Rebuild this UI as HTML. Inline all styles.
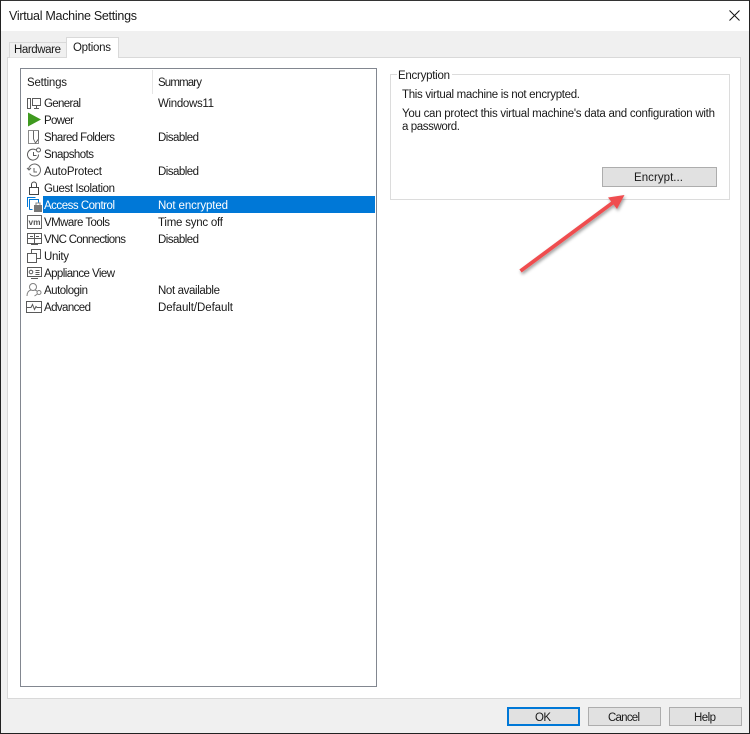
<!DOCTYPE html>
<html><head><meta charset="utf-8"><style>
html,body{margin:0;padding:0;background:#fff;overflow:hidden}
svg{display:block}
text{font-family:"Liberation Sans",sans-serif;font-size:11.5px;fill:#1a1a1a}
</style></head><body>
<svg width="750" height="734" viewBox="0 0 750 734" xmlns="http://www.w3.org/2000/svg" shape-rendering="crispEdges">
<defs><filter id="sh" x="-20%" y="-20%" width="140%" height="140%"><feDropShadow dx="1" dy="2" stdDeviation="1.6" flood-color="#000" flood-opacity=".4"/></filter></defs>
<rect width="750" height="734" fill="#f0f0f0"/>
<rect width="750" height="31" fill="#fff"/>
<rect x="0" y="0" width="750" height="1" fill="#333"/>
<rect x="0" y="0" width="1" height="734" fill="#222"/>
<rect x="749" y="0" width="1" height="734" fill="#222"/>
<rect x="0" y="733" width="750" height="1" fill="#222"/>
<text x="9" y="20" style="font-size:12.5px" textLength="128" lengthAdjust="spacing">Virtual Machine Settings</text>
<g shape-rendering="auto" stroke="#111" stroke-width="1"><path d="M729.5 10.5l10 10M739.5 10.5l-10 10" fill="none"/></g>

<!-- Tab pane -->
<rect x="7.5" y="57.5" width="733" height="641" fill="#fff" stroke="#d9d9d9"/>
<path d="M9.5 57.5V42.5H66.5V57" fill="#f0f0f0" stroke="#d9d9d9"/>
<rect x="66.5" y="37.5" width="52" height="20" fill="#fff" stroke="#d9d9d9"/>
<rect x="67" y="56" width="51" height="3" fill="#fff"/>
<text x="14" y="53" textLength="47" lengthAdjust="spacing">Hardware</text>
<text x="73" y="51" textLength="38" lengthAdjust="spacing">Options</text>

<!-- List -->
<rect x="20.5" y="68.5" width="356" height="618" fill="#fff" stroke="#828790"/>
<rect x="152" y="70" width="1" height="24" fill="#e5e5e5"/>
<text x="27" y="86" textLength="40" lengthAdjust="spacing">Settings</text>
<text x="158" y="86" textLength="44" lengthAdjust="spacing">Summary</text>
<rect x="43" y="196" width="332" height="17" fill="#0078d7"/>

<g>
<text x="44" y="107" textLength="37" lengthAdjust="spacing">General</text>
<text x="44" y="124" textLength="30" lengthAdjust="spacing">Power</text>
<text x="44" y="141" textLength="71" lengthAdjust="spacing">Shared Folders</text>
<text x="44" y="158" textLength="50" lengthAdjust="spacing">Snapshots</text>
<text x="44" y="175" textLength="58" lengthAdjust="spacing">AutoProtect</text>
<text x="44" y="192" textLength="71" lengthAdjust="spacing">Guest Isolation</text>
<text x="44" y="209" textLength="71" lengthAdjust="spacing" style="fill:#fff">Access Control</text>
<text x="44" y="226" textLength="66" lengthAdjust="spacing">VMware Tools</text>
<text x="44" y="243" textLength="82" lengthAdjust="spacing">VNC Connections</text>
<text x="44" y="260" textLength="25" lengthAdjust="spacing">Unity</text>
<text x="44" y="277" textLength="71" lengthAdjust="spacing">Appliance View</text>
<text x="44" y="294" textLength="44" lengthAdjust="spacing">Autologin</text>
<text x="44" y="311" textLength="47" lengthAdjust="spacing">Advanced</text>

<text x="158" y="107" textLength="56" lengthAdjust="spacing">Windows11</text>
<text x="158" y="141" textLength="41" lengthAdjust="spacing">Disabled</text>
<text x="158" y="175" textLength="41" lengthAdjust="spacing">Disabled</text>
<text x="158" y="209" textLength="70" lengthAdjust="spacing" style="fill:#fff">Not encrypted</text>
<text x="158" y="226" textLength="65" lengthAdjust="spacing">Time sync off</text>
<text x="158" y="243" textLength="41" lengthAdjust="spacing">Disabled</text>
<text x="158" y="294" textLength="62" lengthAdjust="spacing">Not available</text>
<text x="158" y="311" textLength="75" lengthAdjust="spacing">Default/Default</text>
</g>

<!-- Icons -->
<g fill="none" stroke="#5a5a5a" stroke-width="1">
<!-- general -->
<path d="M27.500 98.500h3v10h-3zM32.500 98.500h8v7h-8zM34 108.500h5M36.500 106v2"/>
<!-- shared folders -->
<path d="M28.500 130.500h10v13h-10z" stroke="#8a8a8a"/><path d="M33.500 131v8l2 4 3-4v-8" stroke="#666"/>
<!-- snapshots -->
<g shape-rendering="auto"><path d="M36 150a5.500 5.500 0 1 0 2.500 4.500"/><path d="M33.500 152v3.500h3"/><circle cx="38.500" cy="150" r="2"/></g>
<!-- autoprotect -->
<g shape-rendering="auto" stroke="#666"><path d="M28.600 169a6 6 0 1 1 1 4.500"/><path d="M34 168v4h3"/><path d="M27 168l2 2 2-2"/></g>
<!-- guest isolation -->
<rect x="29.500" y="187.500" width="9" height="7" stroke="#444"/><path d="M31.500 187v-2.500a2.500 2.500 0 0 1 5 0v2.500" shape-rendering="auto" stroke="#444"/>
<!-- access control -->
<path d="M27.500 207v-9.500h8" stroke="#0078d7"/><path d="M29.500 209.500v-10h9v3M29.500 209.500h3" stroke="#0078d7"/>
<rect x="34" y="205" width="8" height="7" fill="#777" stroke="none"/><path d="M36 205v-2h4v2" stroke="#888"/>
<!-- vm -->
<rect x="27.500" y="215.500" width="14" height="13" stroke="#666"/>
<!-- vnc -->
<path d="M27.500 233.500h14v10h-14zM27.500 238.500h14M34.500 233.500v10M31 244.500h7M30 236.500h3M36 236.500h3" stroke="#5a5a5a"/>
<!-- unity -->
<path d="M27.500 253.500h9v9h-9zM31.500 253v-3.500h9v9h-4" stroke="#5a5a5a"/>
<!-- appliance -->
<path d="M27.500 267.500h14v9h-14zM31 278.500h7M35.500 270.500h4M35.500 272.500h4M35.500 274.500h4" stroke="#5a5a5a"/>
<circle cx="31" cy="272" r="1.800" fill="none" stroke="#5a5a5a" shape-rendering="auto"/>
<!-- autologin -->
<g shape-rendering="auto" stroke="#808080"><circle cx="33" cy="287" r="3.500"/><path d="M27 296c0-4 2-5.500 4-6M35 290l2 1"/><circle cx="39" cy="292.500" r="2"/><path d="M37.500 294l-3 2"/></g>
<!-- advanced -->
<rect x="26.500" y="301.500" width="15" height="11" stroke="#5a5a5a"/><path d="M27 307.500h4l1.500-3 2 5 1.500-3 1 1h4" shape-rendering="auto" stroke="#5a5a5a"/>
</g>
<text x="28.500" y="225" style="font-size:8px;font-weight:bold;fill:#555" textLength="12" lengthAdjust="spacingAndGlyphs">vm</text>
<path d="M28 112.500L41 119.500L28 126.500Z" fill="#3f9a1f" shape-rendering="auto"/>

<!-- Group -->
<path d="M397 74.500H390.500V199.500H729.500V74.500H452" fill="none" stroke="#dcdcdc"/>
<text x="398" y="79" textLength="52" lengthAdjust="spacing">Encryption</text>
<text x="402" y="98" textLength="178" lengthAdjust="spacing">This virtual machine is not encrypted.</text>
<text x="402" y="117" textLength="313" lengthAdjust="spacing">You can protect this virtual machine's data and configuration with</text>
<text x="402" y="130" textLength="58" lengthAdjust="spacing">a password.</text>

<rect x="602.500" y="167.500" width="114" height="19" fill="#e1e1e1" stroke="#adadad"/>
<text x="634" y="181" textLength="49" lengthAdjust="spacing">Encrypt...</text>

<!-- Arrow -->
<g shape-rendering="auto" filter="url(#sh)">
<path d="M520.500 271L613 202.500" stroke="#ef4d50" stroke-width="3.800" fill="none"/>
<path d="M624.500 195L608 197.500L617 209Z" fill="#ef4d50"/>
</g>

<!-- Footer buttons -->
<rect x="508" y="708" width="71" height="17" fill="#e1e1e1" stroke="#0078d7" stroke-width="2"/>
<text x="535" y="721" textLength="16" lengthAdjust="spacing">OK</text>
<rect x="588.500" y="707.500" width="72" height="18" fill="#e1e1e1" stroke="#adadad"/>
<text x="608" y="721" textLength="32" lengthAdjust="spacing">Cancel</text>
<rect x="669.500" y="707.500" width="72" height="18" fill="#e1e1e1" stroke="#adadad"/>
<text x="694" y="721" textLength="22" lengthAdjust="spacing">Help</text>
</svg>
</body></html>
